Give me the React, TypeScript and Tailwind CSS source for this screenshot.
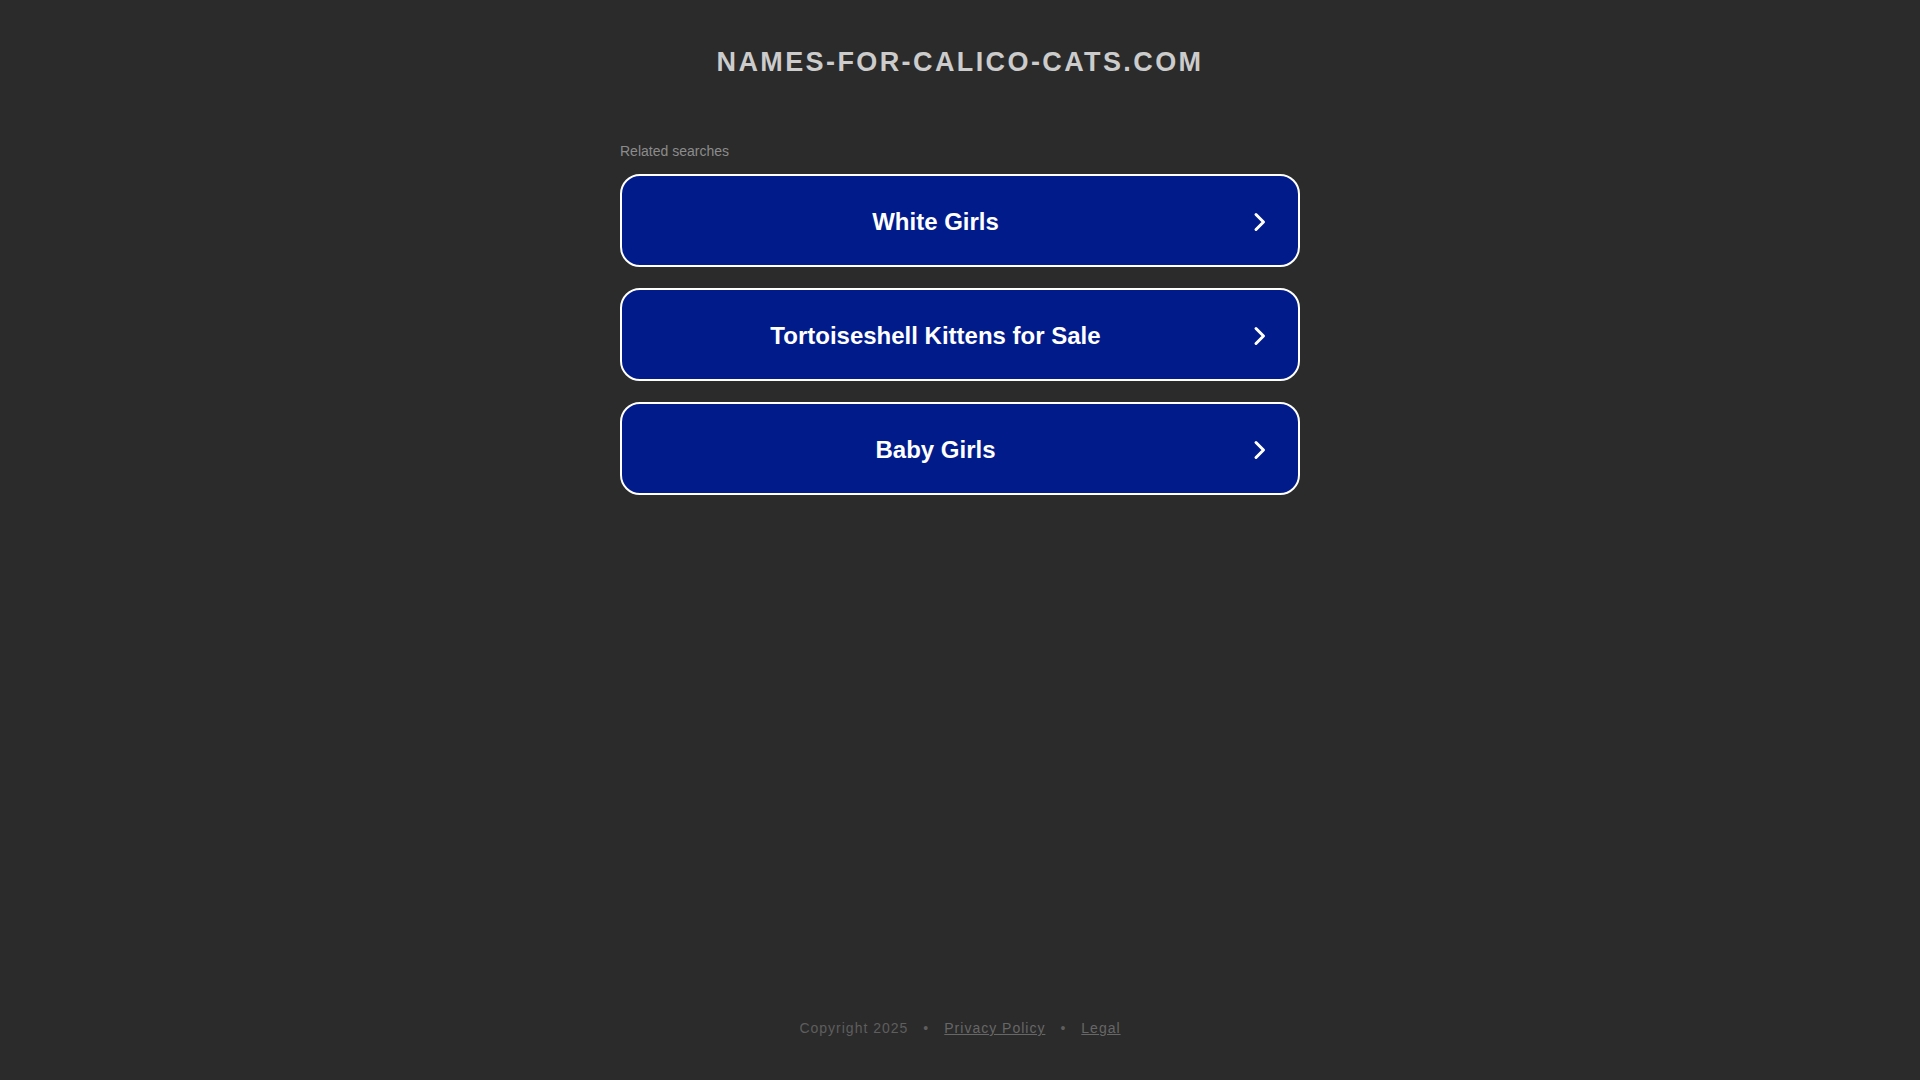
import { FC } from 'react';

const searches = ['White Girls', 'Tortoiseshell Kittens for Sale', 'Baby Girls'];

const Chevron: FC = () => (
  <svg width="14" height="20" viewBox="0 0 14 20" fill="none" className="shrink-0">
    <path d="M3 2.5L10.5 10L3 17.5" stroke="white" strokeWidth="3" strokeLinecap="round" strokeLinejoin="round" />
  </svg>
);

export default function App() {
  return (
    <div className="min-h-screen bg-[#2b2b2b] flex flex-col items-center font-['Liberation_Sans',Arial,sans-serif]">
      <h1 className="mt-[47px] text-[27px] leading-[30px] font-bold tracking-[2.4px] text-[#cccccc]">
        NAMES-FOR-CALICO-CATS.COM
      </h1>

      <div className="w-[680px] mt-[64px]">
        <p className="text-[14px] leading-[20px] text-[#8c8c8c]">Related searches</p>

        <div className="mt-[13px] flex flex-col gap-[21px]">
          {searches.map((s) => (
            <a
              key={s}
              href="#"
              className="h-[93px] flex items-center gap-[36px] pl-[32px] pr-[31px] pt-[2px] bg-[#011b8b] border-2 border-white rounded-[20px]"
            >
              <span className="flex-1 text-center text-[24px] font-bold text-white">{s}</span>
              <Chevron />
            </a>
          ))}
        </div>
      </div>

      {/* footer */}
      <footer className="mt-auto pb-[42px] flex items-center gap-[15px] text-[14px] leading-[20px] tracking-[1px] text-[#5e5e5e]">
        <span>Copyright 2025</span>
        <span>•</span>
        <a href="#" className="underline text-[#676767]">Privacy Policy</a>
        <span>•</span>
        <a href="#" className="underline text-[#676767]">Legal</a>
      </footer>
    </div>
  );
}
